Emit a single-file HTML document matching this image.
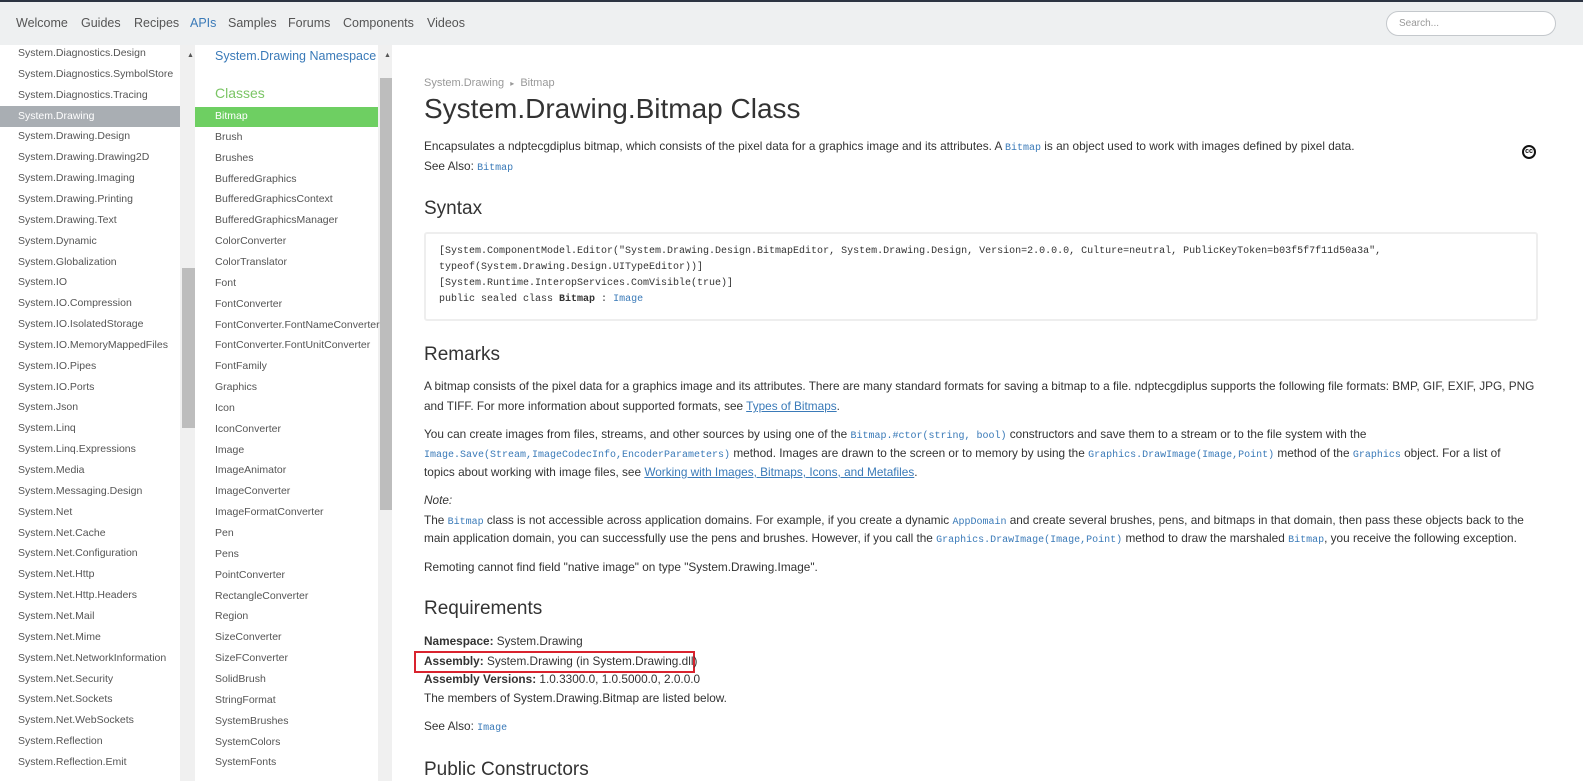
<!DOCTYPE html>
<html><head><meta charset="utf-8"><style>
*{margin:0;padding:0;box-sizing:border-box}
body{width:1583px;height:781px;overflow:hidden;background:#fff;font-family:"Liberation Sans",sans-serif;color:#333;position:relative}
.top{position:absolute;left:0;top:0;width:1583px;height:2px;background:#2c3442}
.nav{position:absolute;left:0;top:2px;width:1583px;height:43px;background:#eef0f1}
.nav span{position:absolute;top:14px;font-size:12.5px;color:#555}
.search{position:absolute;left:1386px;top:11px;width:170px;height:25px;border:1px solid #c4c8cc;border-radius:13px;background:#fff;font-size:10px;color:#999;padding:6px 12px}
.l{position:absolute;font-size:10.5px;color:#555;white-space:nowrap}
.sb{position:absolute;background:#f0f0f0}
.th{position:absolute;background:#bdbdbd}
.c{position:absolute;left:424px;white-space:nowrap;font-size:11.8px;color:#333}
.h{position:absolute;left:424px;font-size:19px;color:#333;white-space:nowrap}
code,.m{font-family:"Liberation Mono",monospace;font-size:10px;color:#3a7ab8}
a{color:#3a7ab8;text-decoration:underline}
.pc{position:absolute;left:439px;font-family:"Liberation Mono",monospace;font-size:10px;color:#333;white-space:nowrap}
</style></head><body>
<div class="top"></div>
<div class="nav">
<span style="left:16px">Welcome</span><span style="left:81px">Guides</span><span style="left:134px">Recipes</span><span style="left:190px;color:#3a7ab8">APIs</span><span style="left:228px">Samples</span><span style="left:288px">Forums</span><span style="left:343px">Components</span><span style="left:427px">Videos</span>
</div>
<div class="search">Search...</div>

<div style="position:absolute;left:0;top:106px;width:180px;height:21px;background:#a9aeb3"></div>
<div style="position:absolute;left:195px;top:107px;width:183px;height:20px;background:#6ecf62"></div>
<div class="sb" style="left:180px;top:45px;width:15px;height:736px"></div>
<div class="th" style="left:182px;top:268px;width:13px;height:160px"></div>
<div style="position:absolute;left:187px;top:52px;font-size:7px;color:#555">▲</div>
<div class="sb" style="left:378px;top:45px;width:14px;height:736px"></div>
<div class="th" style="left:380px;top:78px;width:12px;height:432px"></div>
<div style="position:absolute;left:384px;top:52px;font-size:7px;color:#555">▲</div>

<div id="left"></div>

<div style="position:absolute;left:215px;top:49px;font-size:12.5px;color:#3a7ab8">System.Drawing Namespace</div>
<div style="position:absolute;left:215px;top:85px;font-size:14px;color:#7bc565">Classes</div>

<div class="c" style="top:77px;color:#999;font-size:11px">System.Drawing &nbsp;<span style="font-size:8px">▸</span>&nbsp; Bitmap</div>
<div class="h" style="top:93px;font-size:28px;color:#333">System.Drawing.Bitmap Class</div>
<div class="c" style="top:139px">Encapsulates a ndptecgdiplus bitmap, which consists of the pixel data for a graphics image and its attributes. A <code>Bitmap</code> is an object used to work with images defined by pixel data.</div>
<div class="c" style="top:159px">See Also: <code>Bitmap</code></div>
<div style="position:absolute;left:1522px;top:145px;width:14px;height:14px;border:2px solid #111;border-radius:50%;font-size:7px;font-weight:bold;text-align:center;line-height:10px;color:#111">cc</div>
<div class="h" style="top:198px">Syntax</div>
<div style="position:absolute;left:424px;top:232px;width:1114px;height:89px;border:2px solid #eee;border-radius:3px"></div>
<div class="pc" style="top:246px">[System.ComponentModel.Editor("System.Drawing.Design.BitmapEditor, System.Drawing.Design, Version=2.0.0.0, Culture=neutral, PublicKeyToken=b03f5f7f11d50a3a",</div>
<div class="pc" style="top:262px">typeof(System.Drawing.Design.UITypeEditor))]</div>
<div class="pc" style="top:278px">[System.Runtime.InteropServices.ComVisible(true)]</div>
<div class="pc" style="top:294px">public sealed class <b>Bitmap</b> : <span class="m">Image</span></div>
<div class="h" style="top:344px">Remarks</div>
<div class="c" style="top:379px">A bitmap consists of the pixel data for a graphics image and its attributes. There are many standard formats for saving a bitmap to a file. ndptecgdiplus supports the following file formats: BMP, GIF, EXIF, JPG, PNG</div>
<div class="c" style="top:399px">and TIFF. For more information about supported formats, see <a>Types of Bitmaps</a>.</div>
<div class="c" style="top:427px">You can create images from files, streams, and other sources by using one of the <code>Bitmap.#ctor(string, bool)</code> constructors and save them to a stream or to the file system with the</div>
<div class="c" style="top:446px"><code>Image.Save(Stream,ImageCodecInfo,EncoderParameters)</code> method. Images are drawn to the screen or to memory by using the <code>Graphics.DrawImage(Image,Point)</code> method of the <code>Graphics</code> object. For a list of</div>
<div class="c" style="top:465px">topics about working with image files, see <a>Working with Images, Bitmaps, Icons, and Metafiles</a>.</div>
<div class="c" style="top:493px;font-style:italic">Note:</div>
<div class="c" style="top:513px">The <code>Bitmap</code> class is not accessible across application domains. For example, if you create a dynamic <code>AppDomain</code> and create several brushes, pens, and bitmaps in that domain, then pass these objects back to the</div>
<div class="c" style="top:531px">main application domain, you can successfully use the pens and brushes. However, if you call the <code>Graphics.DrawImage(Image,Point)</code> method to draw the marshaled <code>Bitmap</code>, you receive the following exception.</div>
<div class="c" style="top:560px">Remoting cannot find field "native image" on type "System.Drawing.Image".</div>
<div class="h" style="top:598px">Requirements</div>
<div class="c" style="top:634px"><b>Namespace:</b> System.Drawing</div>
<div style="position:absolute;left:414px;top:651px;width:281px;height:22px;border:2px solid #d9232e"></div>
<div class="c" style="top:654px"><b>Assembly:</b> System.Drawing (in System.Drawing.dll)</div>
<div class="c" style="top:672px"><b>Assembly Versions:</b> 1.0.3300.0, 1.0.5000.0, 2.0.0.0</div>
<div class="c" style="top:691px">The members of System.Drawing.Bitmap are listed below.</div>
<div class="c" style="top:719px">See Also: <code>Image</code></div>
<div class="h" style="top:759px">Public Constructors</div>

<script>
var L=["System.Diagnostics.Design","System.Diagnostics.SymbolStore","System.Diagnostics.Tracing","System.Drawing","System.Drawing.Design","System.Drawing.Drawing2D","System.Drawing.Imaging","System.Drawing.Printing","System.Drawing.Text","System.Dynamic","System.Globalization","System.IO","System.IO.Compression","System.IO.IsolatedStorage","System.IO.MemoryMappedFiles","System.IO.Pipes","System.IO.Ports","System.Json","System.Linq","System.Linq.Expressions","System.Media","System.Messaging.Design","System.Net","System.Net.Cache","System.Net.Configuration","System.Net.Http","System.Net.Http.Headers","System.Net.Mail","System.Net.Mime","System.Net.NetworkInformation","System.Net.Security","System.Net.Sockets","System.Net.WebSockets","System.Reflection","System.Reflection.Emit"];
var M=["Bitmap","Brush","Brushes","BufferedGraphics","BufferedGraphicsContext","BufferedGraphicsManager","ColorConverter","ColorTranslator","Font","FontConverter","FontConverter.FontNameConverter","FontConverter.FontUnitConverter","FontFamily","Graphics","Icon","IconConverter","Image","ImageAnimator","ImageConverter","ImageFormatConverter","Pen","Pens","PointConverter","RectangleConverter","Region","SizeConverter","SizeFConverter","SolidBrush","StringFormat","SystemBrushes","SystemColors","SystemFonts"];
var h="";
L.forEach(function(t,i){h+='<div class="l" style="left:18px;top:'+(47+i*20.85)+'px;'+(i==3?'color:#fff':'')+'">'+t+'</div>';});
M.forEach(function(t,i){h+='<div class="l" style="left:215px;top:'+(110+i*20.85)+'px;'+(i==0?'color:#fff':'')+'">'+t+'</div>';});
document.getElementById('left').innerHTML=h;
</script>
</body></html>
